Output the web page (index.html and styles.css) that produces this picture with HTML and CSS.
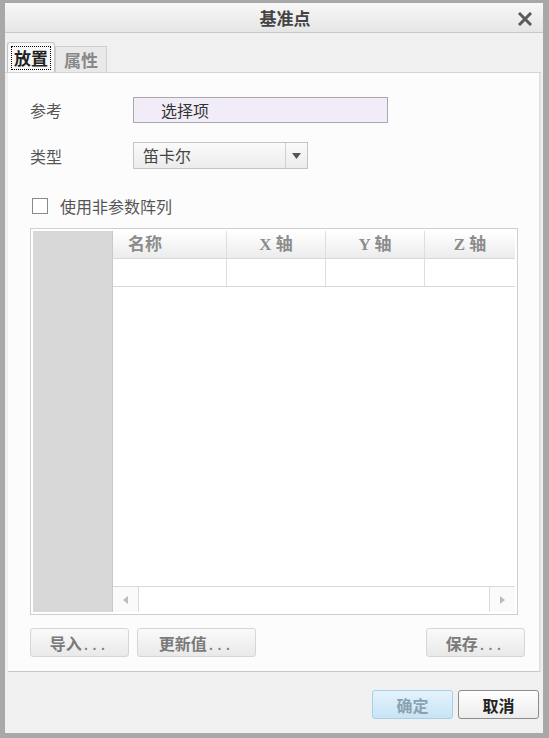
FILE: index.html
```html
<!DOCTYPE html>
<html lang="zh-CN">
<head>
  <meta charset="UTF-8">
  <meta name="viewport" content="width=device-width, initial-scale=1.0">
  <title>基准点</title>
  <link rel="stylesheet" href="styles.css">
</head>

<body>
  <div class="window">
    <div class="titlebar">
      <span class="title">基准点</span>
      <span class="close">
        <svg width="14" height="14" viewBox="0 0 14 14">
          <path d="M2 2 L12 12 M12 2 L2 12" stroke="#5a5a5a" stroke-width="3" stroke-linecap="square"/>
        </svg>
      </span>
    </div>

    <div class="tabs">
      <div class="tab active"><span class="focus">放置</span></div>
      <div class="tab">属性</div>
    </div>

    <div class="panel">
      <div class="row">
        <span class="label">参考</span>
        <div class="picker">选择项</div>
      </div>
      <div class="row">
        <span class="label">类型</span>
        <div class="select">
          <span class="select-text">笛卡尔</span>
          <span class="select-arrow">
            <svg width="9" height="6" viewBox="0 0 9 6"><path d="M0 0 H9 L4.5 6 Z" fill="#555"/></svg>
          </span>
        </div>
      </div>
      <label class="check">
        <span class="box"></span>
        使用非参数阵列
      </label>

      <div class="table">
        <div class="side"></div>
        <div class="grid">
          <div class="head">
            <div class="cell name">名称</div>
            <div class="cell c1">X 轴</div>
            <div class="cell c2">Y 轴</div>
            <div class="cell c3">Z 轴</div>
          </div>
          <div class="line">
            <div class="cell name"></div>
            <div class="cell c1"></div>
            <div class="cell c2"></div>
            <div class="cell c3"></div>
          </div>
          <div class="blank"></div>
          <div class="scroll">
            <span class="arrow">
              <svg width="5" height="8" viewBox="0 0 5 8"><path d="M5 0 V8 L0 4 Z" fill="#bbb"/></svg>
            </span>
            <span class="track"></span>
            <span class="arrow">
              <svg width="5" height="8" viewBox="0 0 5 8"><path d="M0 0 V8 L5 4 Z" fill="#bbb"/></svg>
            </span>
          </div>
        </div>
      </div>

      <div class="actions">
        <button class="btn w1">导入<span class="dots">...</span></button>
        <button class="btn w2">更新值<span class="dots">...</span></button>
        <button class="btn w1 push">保存<span class="dots">...</span></button>
      </div>
    </div>

    <div class="footer">
      <button class="dlg ok">确定</button>
      <button class="dlg cancel">取消</button>
    </div>
  </div>
</body>
</html>
```

FILE: styles.css
```css
body {
  margin: 0;
  background-color: #a8a8a8;
  font-family: "Noto Sans CJK SC", "Noto Sans", sans-serif;
  height: 738px;
  overflow: hidden;
}

.window {
  margin: 3px 6px 0 5px;
  height: 730px;
  background-color: #f0f0f0;
  display: flex;
  flex-direction: column;
}

.titlebar {
  height: 29px;
  background: linear-gradient(#f7f7f7, #e6e6e6);
  border-bottom: 1px solid #c8c8c8;
  display: flex;
  align-items: center;
  justify-content: center;
  position: relative;
}

.title {
  font-size: 17px;
  font-weight: bold;
  color: #444;
  margin-left: 22px;
}

.close {
  position: absolute;
  right: 11px;
  top: 9px;
  line-height: 0;
}

.tabs {
  height: 39px;
  display: flex;
  align-items: flex-end;
  padding-left: 2px;
  border-bottom: 1px solid #d4d4d4;
  margin-right: 2px;
}

.tab {
  height: 25px;
  padding: 0 8px;
  font-size: 17px;
  font-weight: bold;
  color: #888;
  background-color: #e9e9e9;
  border: 1px solid #cfcfcf;
  border-bottom: none;
  display: flex;
  align-items: center;
}

.tab.active {
  height: 29px;
  padding: 0 3px;
  color: #222;
  background-color: #f7f7f7;
  border-color: #c4c4c4;
  border-radius: 3px 3px 0 0;
}

.focus {
  border: 1px dotted #000;
  padding: 0 2px;
  line-height: 22px;
}

.panel {
  box-sizing: border-box;
  height: 599px;
  margin-left: 3px;
  margin-right: 2px;
  background-color: #fcfcfc;
  border-right: 2px solid #e2e2e2;
  border-bottom: 1px solid #c8c8c8;
  padding: 24px 0 0 22px;
  display: flex;
  flex-direction: column;
}

.row {
  display: flex;
  align-items: center;
  margin-bottom: 19px;
}

.label {
  width: 103px;
  font-size: 16px;
  color: #555;
}

.picker {
  width: 226px;
  height: 24px;
  padding-left: 27px;
  background-color: #f1ecf8;
  border: 1px solid #a9a9a9;
  font-size: 16px;
  line-height: 24px;
  color: #333;
}

.select {
  width: 173px;
  height: 25px;
  border: 1px solid #c4c4c4;
  background: linear-gradient(#fafafa, #ececec);
  display: flex;
}

.select-text {
  flex: 1;
  padding-left: 9px;
  font-size: 16px;
  line-height: 25px;
  color: #444;
}

.select-arrow {
  width: 21px;
  border-left: 1px solid #d0d0d0;
  display: flex;
  align-items: center;
  justify-content: center;
}

.check {
  display: flex;
  align-items: center;
  height: 16px;
  margin-top: 10px;
  font-size: 16px;
  color: #555;
}

.box {
  width: 14px;
  height: 14px;
  margin: 0 12px 0 2px;
  background-color: #fff;
  border: 1px solid #8a8a8a;
}

.table {
  margin-top: 14px;
  width: 482px;
  height: 381px;
  border: 1px solid #cfcfcf;
  padding: 2px;
  display: flex;
  background-color: #fff;
}

.side {
  width: 80px;
  background-color: #d8d8d8;
}

.grid {
  flex: 1;
  display: flex;
  flex-direction: column;
  border-left: 1px solid #c9c9c9;
}

.head,
.line {
  display: flex;
  height: 27px;
  border-bottom: 1px solid #d8d8d8;
}

.head {
  background: linear-gradient(#ffffff, #ececec);
}

.cell {
  border-right: 1px solid #dedede;
  font-family: "Liberation Serif", "Noto Sans CJK SC", serif;
  font-size: 17px;
  font-weight: bold;
  color: #8c8c8c;
  line-height: 27px;
  text-align: center;
}

.cell.name {
  width: 114px;
  text-align: left;
  padding-left: 15px;
  box-sizing: border-box;
}

.cell.c1 { width: 98px; }
.cell.c2 { width: 98px; }
.cell.c3 { width: 90px; border-right: none; }

.blank {
  flex: 1;
  border-bottom: 1px solid #d8d8d8;
}

.scroll {
  height: 25px;
  display: flex;
}

.arrow {
  width: 25px;
  display: flex;
  align-items: center;
  justify-content: center;
  background-color: #fafafa;
}

.arrow:first-child {
  border-right: 1px solid #dcdcdc;
}

.arrow:last-child {
  border-left: 1px solid #dcdcdc;
}

.track {
  flex: 1;
  background-color: #fff;
}

.actions {
  display: flex;
  gap: 8px;
  margin-top: 13px;
  margin-right: 14px;
}

.btn {
  height: 29px;
  padding: 0;
  border: 1px solid #d6d6d6;
  border-radius: 3px;
  background: linear-gradient(#fafafa, #e9e9e9);
  font-family: "Noto Sans CJK SC", sans-serif;
  font-size: 16px;
  font-weight: bold;
  color: #7a7a7a;
}

.dots {
  letter-spacing: 4px;
  margin-left: 2px;
  font-weight: normal;
}

.btn.w1 { width: 99px; }
.btn.w2 { width: 119px; }
.btn.push { margin-left: auto; }

.footer {
  flex: 1;
  display: flex;
  justify-content: flex-end;
  align-items: flex-start;
  gap: 5px;
  padding: 18px 4px 0 0;
}

.dlg {
  width: 81px;
  height: 29px;
  border-radius: 3px;
  font-family: "Noto Sans CJK SC", sans-serif;
  font-size: 16px;
  font-weight: bold;
}

.ok {
  border: 1px solid #a8cfe6;
  background: linear-gradient(#e4f3fc, #c6e4f5);
  color: #8aa2b0;
}

.cancel {
  border: 1px solid #8c8c8c;
  background: linear-gradient(#ffffff, #ececec);
  color: #222;
}
```
